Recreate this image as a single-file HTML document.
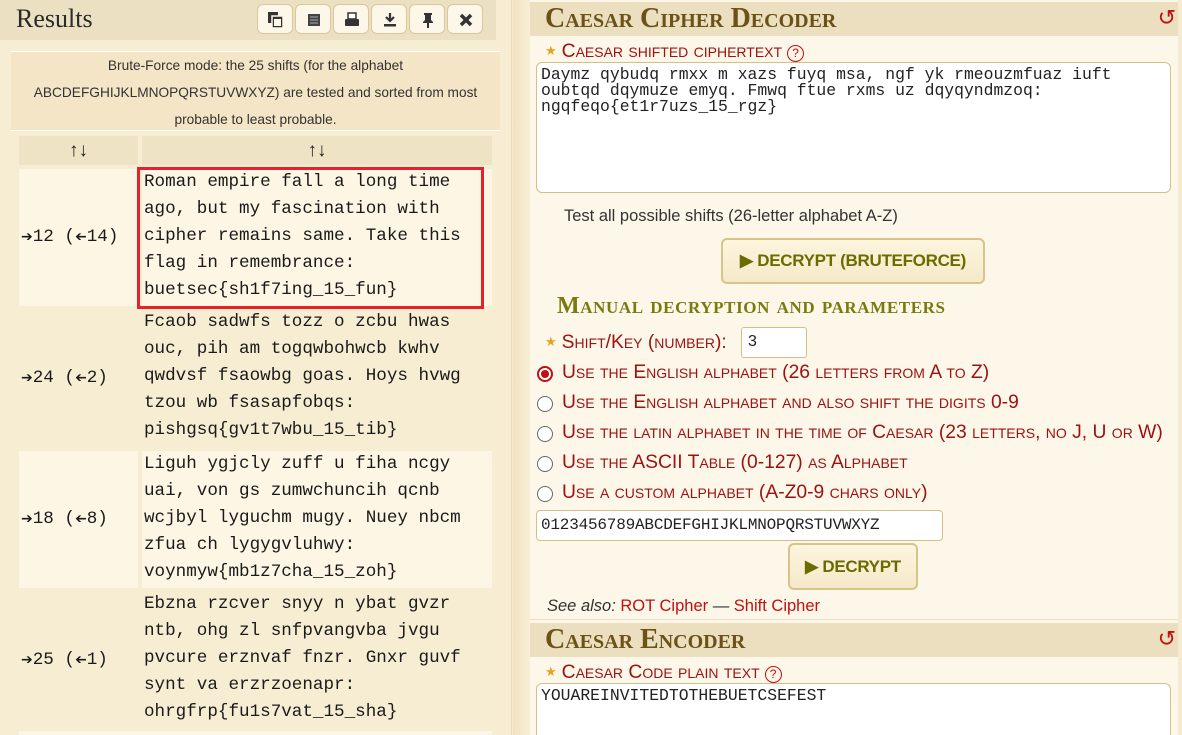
<!DOCTYPE html>
<html><head><meta charset="utf-8"><style>
*{box-sizing:border-box;margin:0;padding:0}
html,body{width:1182px;height:735px;overflow:hidden}
body{background:#f6ebd0;font-family:"Liberation Sans",sans-serif;position:relative}
.abs{position:absolute}
#left{left:0;top:0;width:512px;height:735px;background:#f7edd3;border-right:1px solid #eadcb8;overflow:hidden}
#lhead{left:0;top:0;width:496px;height:40px;background:#ebe0c2}
#lhead .t{position:absolute;left:16px;top:4px;font-family:"Liberation Serif",serif;font-size:26px;color:#2a2a2a}
.btn{position:absolute;top:4px;width:36px;height:30px;background:#fcf7e8;border:1px solid #d9c89a;border-radius:6px}
.btn svg{position:absolute;left:9px;top:6px}
#info{left:11px;top:51px;width:489px;height:80px;background:#f4e5c6;border-top:1px solid #fff;border-bottom:1px solid #fff;text-align:center;font-size:13.7px;line-height:27px;color:#333}
.th{background:#efe3c6;height:29px;top:136px;text-align:center;font-size:19px;line-height:29px;color:#222;font-weight:bold}
.c1{left:19px;width:119px}
.c2{left:142px;width:350px}
.row{font-family:"Liberation Mono",monospace;font-size:17.6px;line-height:27px;color:#1a1a1a}
.row .k{position:absolute;left:19px;width:119px;padding-left:2px;display:flex;align-items:center}
.row .v{position:absolute;left:142px;width:350px;padding-left:2px}
.ar{font-size:14px;font-family:"DejaVu Sans",sans-serif}
.al{display:inline-block;transform:scaleX(-1);font-size:14px;font-family:"DejaVu Sans",sans-serif}
#right{left:530px;top:0;width:648px;height:735px;background:#fcf7e8;overflow:hidden}
.hdr{position:absolute;left:0;width:648px;height:34px;background:#ebdfc0;font-family:"Liberation Serif",serif;font-weight:bold;font-variant:small-caps;font-size:28px;color:#6b5318;padding-left:15px;line-height:34px}
.hdr .r{position:absolute;right:2px;top:0;color:#c01010;font-weight:normal;font-size:22px;font-family:"DejaVu Sans",sans-serif}
.lbl{position:absolute;font-variant:small-caps;color:#9c1111;font-size:19.3px;font-family:"Liberation Sans",sans-serif;white-space:nowrap;line-height:22px}
.star{color:#e6a21a;font-size:13px;margin-right:5px;vertical-align:2px}
.help{display:inline-block;width:17px;height:17px;border:1.5px solid #c01010;border-radius:50%;font-size:12px;line-height:14px;text-align:center;color:#c01010;font-variant:normal;vertical-align:0px;margin-left:5px}
.ta{position:absolute;background:#fff;border:1px solid #d3c089;border-radius:6px;font-family:"Liberation Mono",monospace;font-size:16.4px;line-height:16px;color:#222;padding:4px 4px;white-space:pre}
.bigbtn{position:absolute;background:linear-gradient(#fcf5de,#f5e9c8);border:2px solid #d6c48c;border-radius:6px;color:#6b6b00;font-weight:bold;font-size:17px;text-align:center;line-height:42px;letter-spacing:-0.3px}
.radio{position:absolute;left:7px;width:16px;height:16px;border:1px solid #666;border-radius:50%;background:#fff}
.radio.on{border:2px solid #c01010}
.radio.on:after{content:"";position:absolute;left:2px;top:2px;width:8px;height:8px;border-radius:50%;background:#c01010}
.rl{left:32px}
</style></head><body>
<div id="left" class="abs">
 <div id="lhead" class="abs"><span class="t">Results</span>
  <div class="btn" style="left:257px"><svg width="18" height="18" viewBox="0 0 18 18"><rect x="1" y="1" width="10" height="11" fill="#333"/><rect x="5" y="5" width="11" height="12" fill="#333" stroke="#fcf7e8" stroke-width="1.5"/><rect x="7" y="8" width="7" height="7" fill="#fcf7e8"/></svg></div>
  <div class="btn" style="left:295px"><svg width="18" height="18" viewBox="0 0 18 18"><path d="M3 3h12v12H3z" fill="#444"/><path d="M5 6h8M5 9h8M5 12h8" stroke="#aaa" stroke-width="1"/></svg></div>
  <div class="btn" style="left:333px"><svg width="18" height="18" viewBox="0 0 18 18"><rect x="5" y="2" width="8" height="6" fill="#fff" stroke="#333" stroke-width="1.5"/><rect x="2" y="8" width="14" height="7" rx="1" fill="#333"/></svg></div>
  <div class="btn" style="left:371px"><svg width="18" height="18" viewBox="0 0 18 18"><path d="M9 2v8M5 6l4 4 4-4" stroke="#333" stroke-width="2.2" fill="none"/><rect x="3" y="13" width="12" height="2.5" fill="#333"/></svg></div>
  <div class="btn" style="left:409px"><svg width="18" height="18" viewBox="0 0 18 18"><path d="M5 2h8v2h-1v5l2 2v1H4v-1l2-2V4H5z" fill="#333"/><path d="M9 12v5" stroke="#333" stroke-width="2"/></svg></div>
  <div class="btn" style="left:447px"><svg width="18" height="18" viewBox="0 0 18 18"><path d="M4 4l10 10M14 4L4 14" stroke="#333" stroke-width="3.5"/></svg></div>
 </div>
 <div id="info" class="abs">Brute-Force mode: the 25 shifts (for the alphabet<br>ABCDEFGHIJKLMNOPQRSTUVWXYZ) are tested and sorted from most<br>probable to least probable.</div>
 <div class="abs th c1">↑↓</div><div class="abs th c2">↑↓</div>

 <div class="abs row" style="top:169px;left:0;width:512px;height:137px">
  <div class="k" style="top:0;height:137px;background:#fdf6e4"><span class="ar">➔</span>12 (<span class="al">➔</span>14)</div>
  <div class="v" style="top:0;height:137px;background:#fdf6e4">Roman empire fall a long time<br>ago, but my fascination with<br>cipher remains same. Take this<br>flag in remembrance:<br>buetsec{sh1f7ing_15_fun}</div>
 </div>
 <div class="abs" style="left:137px;top:167px;width:347px;height:142px;border:3px solid #e8202a"></div>

 <div class="abs row" style="top:308px;left:0;width:512px;height:140px">
  <div class="k" style="top:0;height:140px"><span class="ar">➔</span>24 (<span class="al">➔</span>2)</div>
  <div class="v" style="top:1px;height:140px">Fcaob sadwfs tozz o zcbu hwas<br>ouc, pih am togqwbohwcb kwhv<br>qwdvsf fsaowbg goas. Hoys hvwg<br>tzou wb fsasapfobqs:<br>pishgsq{gv1t7wbu_15_tib}</div>
 </div>
 <div class="abs row" style="top:451px;left:0;width:512px;height:137px">
  <div class="k" style="top:0;height:137px;background:#fdf6e4"><span class="ar">➔</span>18 (<span class="al">➔</span>8)</div>
  <div class="v" style="top:0;height:137px;background:#fdf6e4">Liguh ygjcly zuff u fiha ncgy<br>uai, von gs zumwchuncih qcnb<br>wcjbyl lyguchm mugy. Nuey nbcm<br>zfua ch lygygvluhwy:<br>voynmyw{mb1z7cha_15_zoh}</div>
 </div>
 <div class="abs row" style="top:590px;left:0;width:512px;height:140px">
  <div class="k" style="top:0;height:140px"><span class="ar">➔</span>25 (<span class="al">➔</span>1)</div>
  <div class="v" style="top:1px;height:140px">Ebzna rzcver snyy n ybat gvzr<br>ntb, ohg zl snfpvangvba jvgu<br>pvcure erznvaf fnzr. Gnxr guvf<br>synt va erzrzoenapr:<br>ohrgfrp{fu1s7vat_15_sha}</div>
 </div>
 <div class="abs" style="left:19px;top:731px;width:473px;height:4px;background:#fdf6e4"></div>
</div>
<div class="abs" style="left:513px;top:0;width:17px;height:735px;background:linear-gradient(90deg,#f2e3c0,#f8eed6)"></div>

<div id="right" class="abs">
 <div class="hdr" style="top:2px">Caesar Cipher Decoder<span class="r">↺</span></div>
 <div class="lbl" style="left:15px;top:40px"><span class="star">★</span>Caesar shifted ciphertext<span class="help">?</span></div>
 <div class="ta" style="left:6px;top:62px;width:635px;height:131px">Daymz qybudq rmxx m xazs fuyq msa, ngf yk rmeouzmfuaz iuft
oubtqd dqymuze emyq. Fmwq ftue rxms uz dqyqyndmzoq:
ngqfeqo{et1r7uzs_15_rgz}</div>
 <div class="abs" style="left:34px;top:207px;font-size:16.5px;color:#333">Test all possible shifts (26-letter alphabet A-Z)</div>
 <div class="bigbtn" style="left:191px;top:238px;width:264px;height:46px">▶ DECRYPT (BRUTEFORCE)</div>
 <div class="abs" style="left:27px;top:293px;font-family:'Liberation Serif',serif;font-weight:bold;font-variant:small-caps;font-size:24px;letter-spacing:0.6px;color:#7a7a10;white-space:nowrap">Manual decryption and parameters</div>
 <div class="lbl" style="left:15px;top:331px"><span class="star">★</span>Shift/Key (number):</div>
 <div class="abs" style="left:211px;top:327px;width:66px;height:31px;background:#fff;border:1px solid #d3c089;border-radius:3px;font-size:16px;padding:5px 6px;color:#222">3</div>
 <div class="radio on" style="top:366px"></div><div class="lbl rl" style="top:362px">Use the English alphabet (26 letters from A to Z)</div>
 <div class="radio" style="top:396px"></div><div class="lbl rl" style="top:392px">Use the English alphabet and also shift the digits 0-9</div>
 <div class="radio" style="top:426px"></div><div class="lbl rl" style="top:422px">Use the latin alphabet in the time of Caesar (23 letters, no J, U or W)</div>
 <div class="radio" style="top:456px"></div><div class="lbl rl" style="top:452px">Use the ASCII Table (0-127) as Alphabet</div>
 <div class="radio" style="top:486px"></div><div class="lbl rl" style="top:482px">Use a custom alphabet (A-Z0-9 chars only)</div>
 <div class="abs" style="left:6px;top:510px;width:407px;height:31px;background:#fff;border:1px solid #d3c089;border-radius:4px;font-family:'Liberation Mono',monospace;font-size:16px;padding:5px 4px;color:#222;letter-spacing:-0.2px">0123456789ABCDEFGHIJKLMNOPQRSTUVWXYZ</div>
 <div class="bigbtn" style="left:258px;top:543px;width:130px;height:47px;line-height:43px">▶ DECRYPT</div>
 <div class="abs" style="left:17px;top:597px;font-size:16.5px;color:#333"><i>See also:</i> <span style="color:#c01010">ROT Cipher</span> — <span style="color:#c01010">Shift Cipher</span></div>
 <div class="abs" style="left:0;top:619px;width:648px;height:1px;background:#eadfc4"></div>
 <div class="hdr" style="top:623px">Caesar Encoder<span class="r">↺</span></div>
 <div class="lbl" style="left:15px;top:661px"><span class="star">★</span>Caesar Code plain text<span class="help">?</span></div>
 <div class="ta" style="left:6px;top:683px;width:635px;height:70px">YOUAREINVITEDTOTHEBUETCSEFEST</div>
</div>
</body></html>
